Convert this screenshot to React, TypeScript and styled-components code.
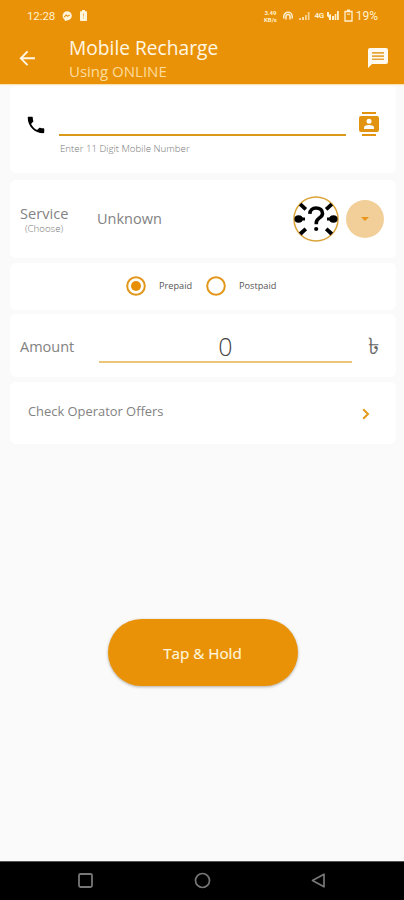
import React from "react";
import styled, { createGlobalStyle } from "styled-components";

const ORANGE = "#ea9207";

const GlobalStyle = createGlobalStyle`
  * { box-sizing: border-box; }
  html, body { margin: 0; padding: 0; background: #fafafa; }
  svg { display: block; flex: none; }
`;

const Screen = styled.div`
  width: 404px;
  height: 900px;
  display: flex;
  flex-direction: column;
  overflow: hidden;
  background: #fafafa;
  color: #828282;
  font-family: "Open Sans", "Noto Sans", sans-serif;
`;

const Header = styled.header`
  flex: none;
  height: 84px;
  background: ${ORANGE};
  color: #fff3d6;
  box-shadow: 0 1px 1px #fbe3b5;
`;

const StatusBar = styled.div`
  height: 31px;
  padding: 0 26px 0 27px;
  display: flex;
  align-items: center;
  font-family: Roboto, sans-serif;
  color: #fff0cf;
`;

const Clock = styled.span`
  width: 27px;
  font-size: 11.5px;
  line-height: 14px;
  letter-spacing: -0.1px;
`;

const StatusLeft = styled.div`
  display: flex;
  align-items: center;
  gap: 8px;
`;

const StatusRight = styled.div`
  margin-left: auto;
  display: flex;
  align-items: center;
`;

const NetSpeed = styled.div`
  width: 16px;
  font-size: 6px;
  line-height: 7px;
  font-weight: 700;
  text-align: center;
  margin-right: 5px;
  white-space: nowrap;
`;

const NetType = styled.span`
  font-size: 8px;
  line-height: 10px;
  font-weight: 700;
  letter-spacing: -0.4px;
  margin: 0 3px 0 4px;
`;

const BatteryLevel = styled.span`
  margin-left: 3px;
  font-size: 12px;
  line-height: 14px;
`;

const TitleBar = styled.div`
  height: 53px;
  padding: 0 16px 0 19px;
  display: flex;
  align-items: center;
`;

const Titles = styled.div`
  flex: 1;
  padding-left: 33px;
  display: flex;
  flex-direction: column;
`;

const Title = styled.h1`
  margin: 3px 0 0;
  font-size: 19.2px;
  line-height: 24px;
  font-weight: 400;
  color: #fff7e3;
`;

const Subtitle = styled.div`
  font-size: 15px;
  line-height: 23px;
  font-weight: 400;
  color: #fcdc9e;
`;

const Content = styled.main`
  flex: 1;
  padding: 2px 8px 0 10px;
  display: flex;
  flex-direction: column;
`;

const Card = styled.section<{ $height: number; $gap: number }>`
  flex: none;
  height: ${(p) => p.$height}px;
  margin-bottom: ${(p) => p.$gap}px;
  display: flex;
  border-radius: 6px;
  background: #fff;
`;

const PhoneCard = styled(Card)`
  padding: 26px 17px 0 15px;
`;

const PhoneIconSlot = styled.div`
  width: 35px;
  padding: 2px 0 0 0;
`;

const NumberField = styled.div`
  width: 287px;
  margin-right: 13px;
  margin-left: -1px;
`;

const NumberLine = styled.div`
  height: 24px;
  border-bottom: 2px solid #d99a1c;
`;

const Hint = styled.div`
  margin: 6px 0 0 1px;
  font-size: 9.7px;
  line-height: 14px;
  font-weight: 300;
  color: #777;
`;

const ServiceCard = styled(Card)`
  align-items: center;
  padding: 0 12px 0 10px;
`;

const ServiceLabel = styled.div`
  width: 48px;
  margin-top: 3px;
  font-size: 14.6px;
  line-height: 17px;
  text-align: center;
`;

const Choose = styled.div`
  font-size: 9.7px;
  line-height: 14px;
  font-weight: 300;
  color: #777;
`;

const ServiceName = styled.div`
  flex: 1;
  padding-left: 29px;
  font-size: 14.5px;
  line-height: 20px;
`;

const DropButton = styled.button`
  width: 38px;
  height: 38px;
  margin-left: 7px;
  padding: 0;
  border: 0;
  border-radius: 50%;
  display: flex;
  align-items: center;
  justify-content: center;
  background: #f2cf98;
`;

const RadioCard = styled(Card)`
  align-items: center;
  padding: 0 0 2px 116px;
`;

const Radio = styled.label<{ $width: number }>`
  width: ${(p) => p.$width}px;
  display: flex;
  align-items: center;
  gap: 13px;
  font-size: 9.2px;
  color: #555;
`;

const AmountCard = styled(Card)`
  padding: 17px 17px 0 10px;
`;

const AmountLabel = styled.div`
  width: 79px;
  padding-top: 6px;
  font-size: 14.5px;
  line-height: 20px;
`;

const AmountField = styled.div`
  width: 253px;
  height: 32px;
  border-bottom: 2px solid #ebc67a;
  font-size: 25px;
  line-height: 31px;
  font-weight: 300;
  text-align: center;
  color: #444;
`;

const Currency = styled.div`
  flex: 1;
  padding-top: 1px;
  text-align: right;
  font-size: 23px;
  line-height: 26px;
  color: #666;
`;

const OfferCard = styled(Card)`
  align-items: center;
  justify-content: space-between;
  padding: 0 26px 4px 18px;
  font-size: 12.9px;
`;

const OfferArrow = styled.svg`
  margin-top: 5px;
`;

const HoldButton = styled.button`
  flex: none;
  align-self: center;
  width: 190px;
  height: 67px;
  margin: 175px 0 0 -1px;
  padding: 0;
  border: 0;
  border-radius: 34px;
  background: ${ORANGE};
  color: #fff6de;
  font: 400 15.2px "Open Sans", sans-serif;
  -webkit-text-stroke: 0.2px #fff6de;
  box-shadow: 0 1px 3px rgba(70, 60, 40, 0.4);
`;

const NavBar = styled.nav`
  flex: none;
  height: 39px;
  padding: 0 77px 1px;
  display: flex;
  align-items: center;
  justify-content: space-between;
  border-top: 1px solid #555;
  background: #000;
`;

const Signal = () => (
  <svg width="11" height="10" viewBox="0 0 11 10" fill="#fff0cf">
    <path d="M0 7h2v2H0z" opacity=".7" />
    <path d="M3 6h2v3H3z" opacity=".8" />
    <path d="M6 4h1.8v5H6zM8.8 1h1.7v8H8.8z" opacity=".7" />
  </svg>
);

const SignalDual = () => (
  <svg width="12" height="10" viewBox="0 0 12 10" fill="#fff0cf">
    <path d="M0 1h2v3l2-1v6H2V7L0 5zM5 5h2v4H5zM7.7 3h1.6v6H7.7zM10 0h1.8v9H10z" />
  </svg>
);

const UnknownOperator = () => (
  <svg width="46" height="46" viewBox="0 0 46 46" fill="none">
    <circle cx="23" cy="23" r="22" fill="#fff" stroke="#dba438" strokeWidth="1.5" />
    <g stroke="#000" strokeWidth="3.8">
      <path d="M7.2 8.2l5.6 5.2M38.8 8.2l-5.6 5.2M7.2 38l5.6-5.2M38.8 38l-5.6-5.2" />
      <path d="M4 23h8M34 23h8" strokeWidth="3.2" />
      <path d="M16.8 17.8c.2-3.8 2.8-5.8 6.2-5.8 3.9 0 6.5 2.2 6.5 5.4 0 4.8-6.2 4.2-6.2 9.3v1.5" strokeWidth="3.6" />
    </g>
    <g fill="#000">
      <ellipse cx="5.6" cy="23" rx="4.2" ry="3.8" />
      <ellipse cx="40.4" cy="23" rx="4.2" ry="3.8" />
      <circle cx="23.2" cy="33" r="2.1" />
    </g>
  </svg>
);

const RadioDot = ({ on }: { on?: boolean }) => (
  <svg width="20" height="20" viewBox="0 0 20 20" fill="none">
    <circle cx="10" cy="10" r="8.8" stroke="#e2971a" strokeWidth="2" />
    {on && <circle cx="10" cy="10" r="5" fill="#e88f08" />}
  </svg>
);

export default function App() {
  return (
    <Screen>
      <GlobalStyle />
      <Header>
        <StatusBar>
          <StatusLeft>
            <Clock>12:28</Clock>
            <svg width="10" height="10" viewBox="0 0 10 10">
              <path d="M5 .2a4.8 4.6 0 0 1 0 9.2l-2 .5-.4-1.2A4.7 4.7 0 0 1 5 .2z" fill="#fff5dc" />
              <path d="M2.2 6.2l2-2.2 1.4 1.3 2.2-1.4" fill="none" stroke={ORANGE} strokeWidth="1.1" />
            </svg>
            <svg width="7" height="11" viewBox="0 0 7 11">
              <path d="M2 0h3v1.2h1.2q.8 0 .8.8v8q0 1-.8 1H.8Q0 11 0 10V2q0-.8.8-.8H2z" fill="#fff5dc" />
              <path d="M3 3.4h1v3H3zM3 7.5h1v1H3z" fill="#f2b85a" />
            </svg>
          </StatusLeft>
          <StatusRight>
            <NetSpeed>3.49<br />KB/s</NetSpeed>
            <svg width="10" height="10" viewBox="0 0 10 10" fill="none" stroke="#fff0cf" strokeWidth="1.5">
              <path d="M.8 7.5V5.4a4.2 4.2 0 0 1 8.4 0v2.1M3 8.5V5.6a2 2 0 0 1 4 0v2.9" />
            </svg>
            <svg width="6" height="1" />
            <Signal />
            <NetType>4G</NetType>
            <SignalDual />
            <svg width="5" height="1" />
            <svg width="9" height="13" viewBox="0 0 9 13" fill="none" stroke="#fff0cf" strokeWidth="1.3">
              <path d="M3 1.2h3M1 2.5h7v9.5H1z" />
              <path d="M3 5.2h3" strokeWidth="1" />
            </svg>
            <BatteryLevel>19%</BatteryLevel>
          </StatusRight>
        </StatusBar>
        <TitleBar>
          <svg width="17" height="16" viewBox="0 0 17 16" fill="none" stroke="#fff7e3" strokeWidth="1.9">
            <path d="M16 8.3H2.2M8.6 1.4L1.8 8.3l6.8 6.8" />
          </svg>
          <Titles>
            <Title>Mobile Recharge</Title>
            <Subtitle>Using ONLINE</Subtitle>
          </Titles>
          <svg width="20" height="20" viewBox="0 0 20 20">
            <path d="M2 0h16q2 0 2 2v12q0 2-2 2H4l-4 4V2q0-2 2-2z" fill="#fffaf0" />
            <path d="M4 4h12v1.7H4zM4 7.2h12v1.7H4zM4 10.4h12v1.7H4z" fill="#e6a63a" />
          </svg>
        </TitleBar>
      </Header>

      <Content>
        <PhoneCard $height={87} $gap={7}>
          <PhoneIconSlot>
            <svg width="22" height="22" viewBox="0 0 24 24" fill="#000">
              <path d="M6.62 10.79c1.44 2.83 3.76 5.14 6.59 6.59l2.2-2.2c.27-.27.67-.36 1.02-.24 1.12.37 2.33.57 3.57.57.55 0 1 .45 1 1V20c0 .55-.45 1-1 1C10.61 21 3 13.39 3 4c0-.55.45-1 1-1h3.5c.55 0 1 .45 1 1 0 1.25.2 2.45.57 3.57.11.35.03.74-.25 1.02z" />
            </svg>
          </PhoneIconSlot>
          <NumberField>
            <NumberLine />
            <Hint>Enter 11 Digit Mobile Number</Hint>
          </NumberField>
          <svg width="20" height="24" viewBox="0 0 20 24">
            <path d="M3 0h14v2H3zM3 22h14v2H3zM2 4h16q2 0 2 2v12q0 2-2 2H2q-2 0-2-2V6q0-2 2-2z" fill="#e2930f" />
            <circle cx="10" cy="9.2" r="2.5" fill="#fff" />
            <path d="M5 17v-1.5q0-2.5 5-2.5t5 2.5V17z" fill="#fff" />
          </svg>
        </PhoneCard>

        <ServiceCard $height={78} $gap={5}>
          <ServiceLabel>
            Service
            <Choose>(Choose)</Choose>
          </ServiceLabel>
          <ServiceName>Unknown</ServiceName>
          <UnknownOperator />
          <DropButton aria-label="Choose service">
            <svg width="8" height="4" viewBox="0 0 8 4">
              <path d="M0 0h8L4 4z" fill="#e8971c" />
            </svg>
          </DropButton>
        </ServiceCard>

        <RadioCard $height={47} $gap={4}>
          <Radio $width={80}><RadioDot on />Prepaid</Radio>
          <Radio $width={90}><RadioDot />Postpaid</Radio>
        </RadioCard>

        <AmountCard $height={63} $gap={5}>
          <AmountLabel>Amount</AmountLabel>
          <AmountField>0</AmountField>
          <Currency>৳</Currency>
        </AmountCard>

        <OfferCard $height={62} $gap={0}>
          Check Operator Offers
          <OfferArrow width="8" height="12" viewBox="0 0 8 12" fill="none" stroke="#e39a1c" strokeWidth="2">
            <path d="M1.2 1.2L6 6l-4.8 4.8" />
          </OfferArrow>
        </OfferCard>

        <HoldButton>Tap &amp; Hold</HoldButton>
      </Content>

      <NavBar>
        <svg width="17" height="17" viewBox="0 0 17 17" fill="none" stroke="#777" strokeWidth="1.8">
          <rect x="2" y="2" width="13" height="13" rx="1.5" />
        </svg>
        <svg width="17" height="17" viewBox="0 0 17 17" fill="none" stroke="#777" strokeWidth="1.7">
          <circle cx="8.5" cy="8.5" r="7" />
        </svg>
        <svg width="17" height="17" viewBox="0 0 17 17" fill="none" stroke="#777" strokeWidth="1.7">
          <path d="M14 2.2v12.6L2.5 8.5z" strokeLinejoin="round" />
        </svg>
      </NavBar>
    </Screen>
  );
}
